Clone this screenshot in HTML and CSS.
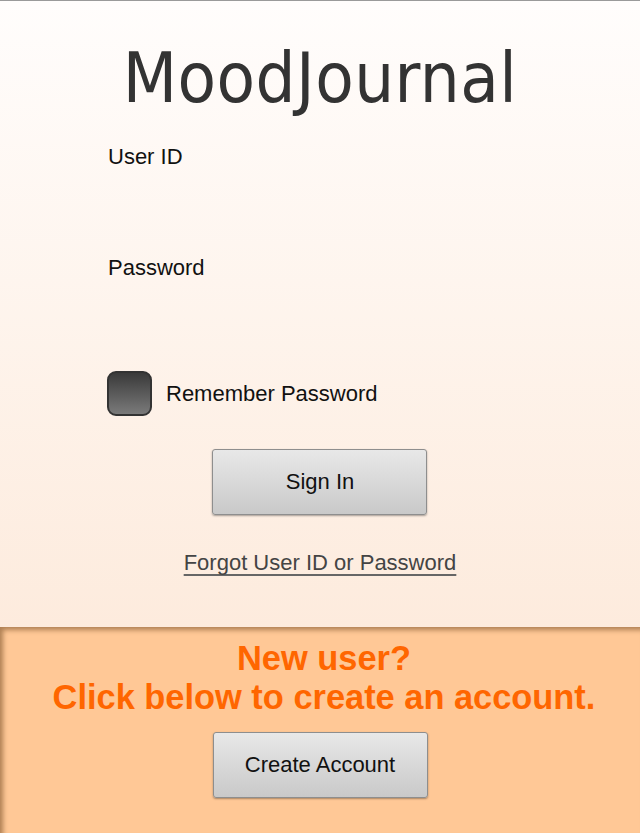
FILE: index.html
```html
<!DOCTYPE html>
<html>
<head>
<meta charset="utf-8">
<link rel="stylesheet" href="styles.css">
</head>
<body>
<div class="page">
  <section class="login">
    <h1 class="title">MoodJournal</h1>
    <div class="form">
      <div class="field">
        <label class="label">User ID</label>
      </div>
      <div class="field">
        <label class="label">Password</label>
      </div>
      <div class="remember">
        <span class="checkbox"></span>
        <span class="remember-text">Remember Password</span>
      </div>
    </div>
    <div class="actions">
      <button class="btn">Sign In</button>
      <a class="forgot" href="#">Forgot User ID or Password</a>
    </div>
  </section>
  <section class="signup">
    <p class="signup-text">New user?<br>Click below to create an account.</p>
    <button class="btn">Create Account</button>
  </section>
</div>
</body>
</html>
```

FILE: styles.css
```css
html, body {
  margin: 0;
  padding: 0;
}
body {
  width: 640px;
  height: 833px;
  overflow: hidden;
  font-family: "Liberation Sans", Arial, sans-serif;
  background: #ffc896;
}
.page {
  display: flex;
  flex-direction: column;
  height: 833px;
}
.login {
  height: 626px;
  border-top: 1px solid #9a9a9a;
  background: linear-gradient(to bottom, #fffdfc 0%, #fdebdd 100%);
  display: flex;
  flex-direction: column;
  align-items: center;
}
.title {
  margin: 37px 0 0 0;
  font-family: "DejaVu Sans Condensed", "Liberation Sans", sans-serif;
  font-weight: normal;
  font-size: 70px;
  line-height: 80px;
  color: #333333;
  letter-spacing: 0.5px;
}
.form {
  align-self: stretch;
  margin-top: 27px;
  padding-left: 107px;
  display: flex;
  flex-direction: column;
}
.field {
  height: 111px;
}
.label {
  display: block;
  padding-left: 1px;
  font-size: 22px;
  line-height: 24px;
  color: #111;
}
.remember {
  display: flex;
  align-items: center;
  gap: 14px;
  margin-top: 4px;
}
.checkbox {
  width: 41px;
  height: 41px;
  border: 2px solid #333;
  border-radius: 9px;
  background: linear-gradient(to bottom, #3a3a3a, #7a7a7a);
}
.remember-text {
  font-size: 22px;
  color: #111;
}
.actions {
  display: flex;
  flex-direction: column;
  align-items: center;
  margin-top: 33px;
  gap: 35px;
}
.btn {
  width: 215px;
  height: 66px;
  border: 1px solid #8e8e8e;
  border-radius: 3px;
  background: linear-gradient(to bottom, #e8e8e8, #c9c9c9);
  box-shadow: 0 1px 2px rgba(0,0,0,0.35);
  font-family: "Liberation Sans", Arial, sans-serif;
  font-size: 22px;
  color: #111;
  padding: 0;
}
.forgot {
  font-size: 22px;
  color: #444;
  text-decoration: underline;
  text-decoration-color: #666;
  text-decoration-skip-ink: none;
  text-underline-offset: 4px;
}
.signup {
  flex: 1;
  background: #ffc896;
  box-shadow: inset 4px 4px 5px -1px rgba(110, 70, 30, 0.55);
  display: flex;
  flex-direction: column;
  align-items: center;
}
.signup-text {
  margin: 12px 0 15px 0;
  padding-left: 8px;
  font-size: 34.4px;
  line-height: 39px;
  font-weight: bold;
  color: #ff6600;
  text-align: center;
}
```
